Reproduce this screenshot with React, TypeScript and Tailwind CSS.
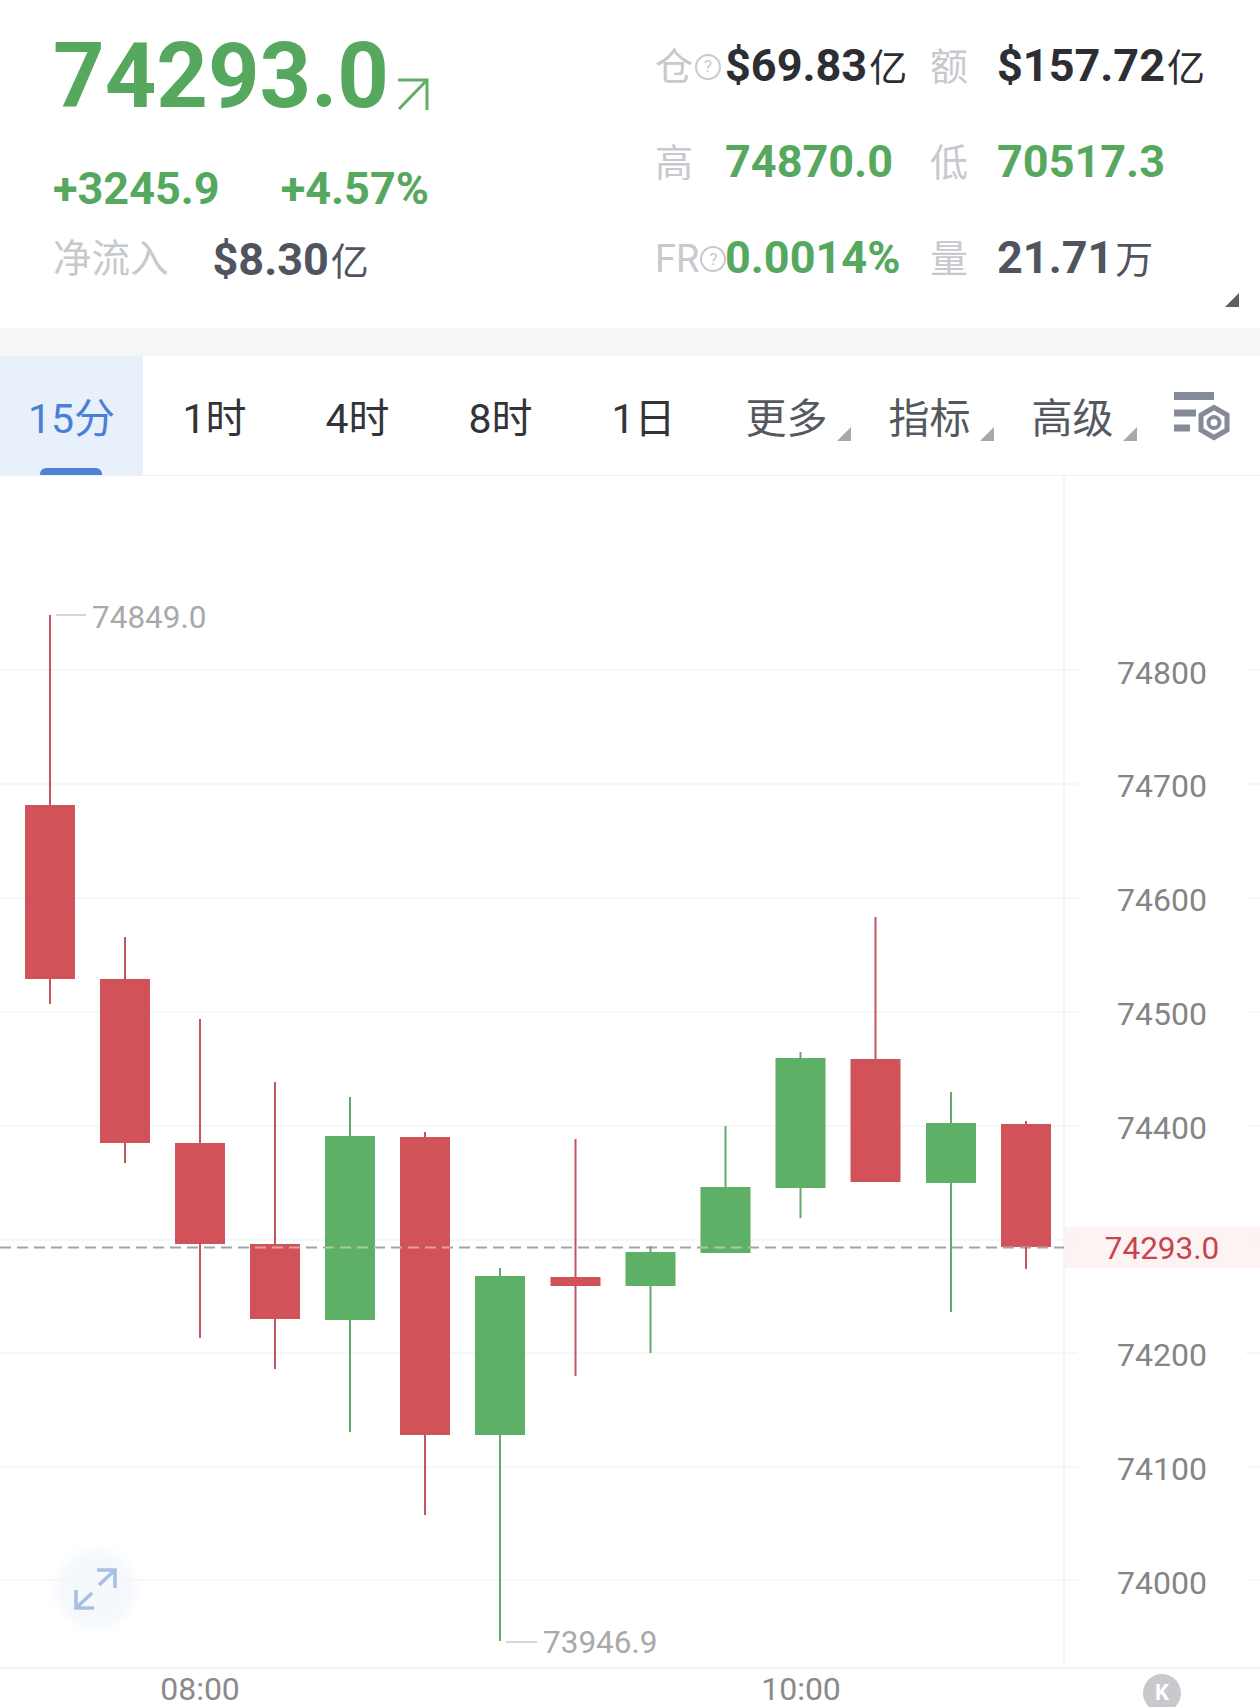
import { ReactNode } from "react";

const CHART_TOP = 476;

// page y values: [x, wickTop, bodyTop, bodyBottom, wickBottom, up]
const candles: [number, number, number, number, number, boolean][] = [
  [50, 615, 805, 979, 1004, false],
  [125, 937, 979, 1143, 1163, false],
  [200, 1019, 1143, 1244, 1338, false],
  [275, 1082, 1244, 1319, 1369, false],
  [350, 1097, 1136, 1320, 1432, true],
  [425, 1132, 1137, 1435, 1515, false],
  [500, 1268, 1276, 1435, 1641, true],
  [575.5, 1139, 1277, 1286, 1376, false],
  [650.5, 1246, 1252, 1286, 1353, true],
  [725.5, 1126, 1187, 1253, 1253, true],
  [800.5, 1052, 1058, 1188, 1218, true],
  [875.5, 917, 1059, 1182, 1182, false],
  [951, 1092, 1123, 1183, 1312, true],
  [1026, 1121, 1124, 1247, 1269, false],
];

const gridLines = [670, 784, 898, 1012, 1126, 1240, 1353, 1467, 1580];

const axisLabels = [
  { y: 673, text: "74800" },
  { y: 786, text: "74700" },
  { y: 900, text: "74600" },
  { y: 1014, text: "74500" },
  { y: 1128, text: "74400" },
  { y: 1355, text: "74200" },
  { y: 1469, text: "74100" },
  { y: 1583, text: "74000" },
];

const tabs = ["1时", "4时", "8时", "1日"];
const menus = ["更多", "指标", "高级"];

function Help({ className }: { className?: string }) {
  return (
    <span
      className={`flex h-[26px] w-[26px] shrink-0 items-center justify-center rounded-full border-2 border-[#c6c9cd] text-[17px] leading-none text-[#c6c9cd] ${className ?? ""}`}
    >
      ?
    </span>
  );
}

function Value({
  children,
  unit,
  color,
}: {
  children: ReactNode;
  unit?: string;
  color: string;
}) {
  return (
    <div className={`flex items-baseline whitespace-nowrap text-[45px] font-bold leading-none ${color}`}>
      {children}
      {unit && <span className="ml-[2px] text-[38px] font-normal">{unit}</span>}
    </div>
  );
}

function Label({ children }: { children: ReactNode }) {
  return (
    <div className="flex items-center whitespace-nowrap pt-[3px] text-[38px] leading-none text-[#c6c9cd]">
      {children}
    </div>
  );
}

function Corner({ className }: { className: string }) {
  return (
    <svg width="14" height="14" viewBox="0 0 14 14" className={className}>
      <path d="M14 0V14H0Z" fill="currentColor" />
    </svg>
  );
}

function Header() {
  return (
    <div className="relative flex h-[328px] shrink-0 justify-between bg-white">
      <div className="pl-[53px] pt-[30px]">
        <div className="flex items-end">
          <span className="text-[90px] font-bold leading-[94px] text-[#55a85e]">74293.0</span>
          <svg width="34" height="34" viewBox="0 0 34 34" className="mb-[13px] ml-[7px]" fill="none" stroke="#62ad6b" strokeWidth="3">
            <path d="M2 3H31V33M31 3L3 32" />
          </svg>
        </div>
        <div className="mt-[42px] flex items-center gap-[61px] text-[45px] font-bold leading-none text-[#55a85e]">
          <span>+3245.9</span>
          <span>+4.57%</span>
        </div>
        <div className="mt-[26px] flex items-center gap-[44px]">
          <span className="text-[38.500px] leading-none text-[#c6c9cd]">净流入</span>
          <Value unit="亿" color="text-[#50545e]">
            $8.30
          </Value>
        </div>
      </div>

      <div className="mr-[59px] mt-[17px] grid h-[289px] w-[546px] grid-cols-[70px_205px_67px_204px] grid-rows-3 items-center">
        <Label>
          仓<Help className="ml-[2px]" />
        </Label>
        <Value unit="亿" color="text-[#2c2e33]">
          $69.83
        </Value>
        <Label>额</Label>
        <Value unit="亿" color="text-[#2c2e33]">
          $157.72
        </Value>

        <Label>高</Label>
        <Value color="text-[#55a85e]">74870.0</Value>
        <Label>低</Label>
        <Value color="text-[#55a85e]">70517.3</Value>

        <Label>
          FR
          <Help className="ml-[1px]" />
        </Label>
        <Value color="text-[#55a85e]">0.0014%</Value>
        <Label>量</Label>
        <Value unit="万" color="text-[#50545e]">
          21.71
        </Value>
      </div>

      <Corner className="absolute bottom-[21px] right-[21px] text-[#5b5f68]" />
    </div>
  );
}

function TabBar() {
  return (
    <div className="flex h-[120px] shrink-0 border-b border-[#eff0f3] bg-white text-[41px] leading-none">
      <div className="relative flex w-[143px] items-center justify-center bg-[#e8f0fb] pt-[7px] text-[#4a7fd6]">
        15分
        <span className="absolute bottom-0 left-[40px] h-[7px] w-[62px] rounded-t-[6px] bg-[#4f82d9]" />
      </div>
      {tabs.map((t) => (
        <div key={t} className="flex w-[143px] items-center justify-center pt-[7px] text-[#333438]">
          {t}
        </div>
      ))}
      {menus.map((m) => (
        <div key={m} className="relative flex w-[143px] items-center justify-center pt-[7px] text-[#55585f]">
          {m}
          <Corner className="absolute right-[7px] top-[71px] text-[#a8a8a8]" />
        </div>
      ))}
      <div className="flex flex-1 items-center justify-center">
        <svg width="58" height="50" viewBox="0 0 58 50" fill="#858a99">
          <rect x="1" y="1" width="40" height="8" />
          <rect x="1" y="18.500" width="22" height="7" />
          <rect x="1" y="33.500" width="16" height="7" />
          <path d="M41 16.500L54 24V39L41 46.500L28 39V24Z" fill="none" stroke="#858a99" strokeWidth="5" />
          <circle cx="41" cy="31.500" r="5.500" fill="none" stroke="#858a99" strokeWidth="4" />
        </svg>
      </div>
    </div>
  );
}

function CandleChart() {
  return (
    <svg viewBox={`0 ${CHART_TOP} 1260 1193`} width="1260" height="1193" className="absolute inset-0">
      <defs>
        <clipPath id="bodies">
          {candles.map(([x, , open, close]) => (
            <rect key={x} x={x - 25} y={open} width="50" height={close - open} />
          ))}
        </clipPath>
      </defs>
      {gridLines.map((y) => (
        <g key={y} stroke="#f3f4f6" strokeWidth="1.500">
          <line x1="0" x2="1078" y1={y} y2={y} />
          <line x1="1246" x2="1260" y1={y} y2={y} />
        </g>
      ))}
      <line x1="1064" x2="1064" y1={CHART_TOP} y2="1669" stroke="#f3f4f6" strokeWidth="2" />
      <line x1="0" x2="1064" y1="1247.500" y2="1247.500" stroke="#a3a3a7" strokeWidth="2" strokeDasharray="11 6" />

      {candles.map(([x, top, open, close, bottom, up]) => (
        <g key={x}>
          <line x1={x} x2={x} y1={top} y2={bottom} stroke={up ? "#62a96b" : "#c25560"} strokeWidth="2" />
          <rect x={x - 25} y={open} width="50" height={close - open} fill={up ? "#5db065" : "#d25259"} />
        </g>
      ))}
      {/* the dashes still show faintly through the candle bodies */}
      <line x1="0" x2="1064" y1="1247.500" y2="1247.500" stroke="#e4d8cf" strokeOpacity="0.6" strokeWidth="2" strokeDasharray="11 6" clipPath="url(#bodies)" />

      <line x1="56" x2="86" y1="615" y2="615" stroke="#c9c9c9" strokeWidth="1.500" />
      <line x1="506" x2="537" y1="1642" y2="1642" stroke="#c9c9c9" strokeWidth="1.500" />
    </svg>
  );
}

function Chart() {
  return (
    <div className="relative h-[1193px] shrink-0 overflow-hidden border-b-2 border-[#f1f2f4] text-[32px] leading-none">
      <div className="absolute left-[1064px] right-0 top-[751px] h-[41px] bg-[#fdf3f2]" />
      <CandleChart />

      {axisLabels.map((l) => (
        <span
          key={l.text}
          className="absolute left-[1162px] -translate-x-1/2 -translate-y-1/2 text-[#858585]"
          style={{ top: l.y - CHART_TOP }}
        >
          {l.text}
        </span>
      ))}
      <span className="absolute left-[1162px] top-[773px] -translate-x-1/2 -translate-y-1/2 text-[31.500px] text-[#c9424f]">74293.0</span>
      <span className="absolute left-[92px] top-[142px] -translate-y-1/2 text-[31.500px] text-[#a9a9a9]">74849.0</span>
      <span className="absolute left-[543px] top-[1167px] -translate-y-1/2 text-[31.500px] text-[#a9a9a9]">73946.9</span>

      <div className="absolute left-[56px] top-[1073px] flex h-[80px] w-[80px] items-center justify-center">
        <div className="absolute inset-0 rounded-full bg-[#f2f6fc]/80 blur-[5px]" />
        <svg width="44" height="42" viewBox="0 0 44 42" fill="none" stroke="#a9c0e0" strokeWidth="3.600" className="relative">
          <path d="M23 2H41V20M41 2L25 17" />
          <path d="M2 22V40H20M2 40L18 25" />
        </svg>
      </div>
    </div>
  );
}

function TimeAxis() {
  return (
    <div className="relative flex-1 text-[32px] leading-none text-[#8a8a8a]">
      <span className="absolute left-[200px] top-[20px] -translate-x-1/2 -translate-y-1/2">08:00</span>
      <span className="absolute left-[801px] top-[20px] -translate-x-1/2 -translate-y-1/2">10:00</span>
      <span className="absolute left-[1143px] top-[5px] flex h-[38px] w-[38px] items-center justify-center rounded-full bg-[#c8c9cd] text-[22px] font-bold text-white">
        K
      </span>
    </div>
  );
}

export default function App() {
  return (
    <div className="flex h-[1707px] w-[1260px] flex-col overflow-hidden bg-white font-[Roboto,'Noto_Sans_CJK_SC',sans-serif]">
      <Header />
      <div className="h-[28px] shrink-0 bg-[#f5f6f8]" />
      <TabBar />
      <Chart />
      <TimeAxis />
    </div>
  );
}
